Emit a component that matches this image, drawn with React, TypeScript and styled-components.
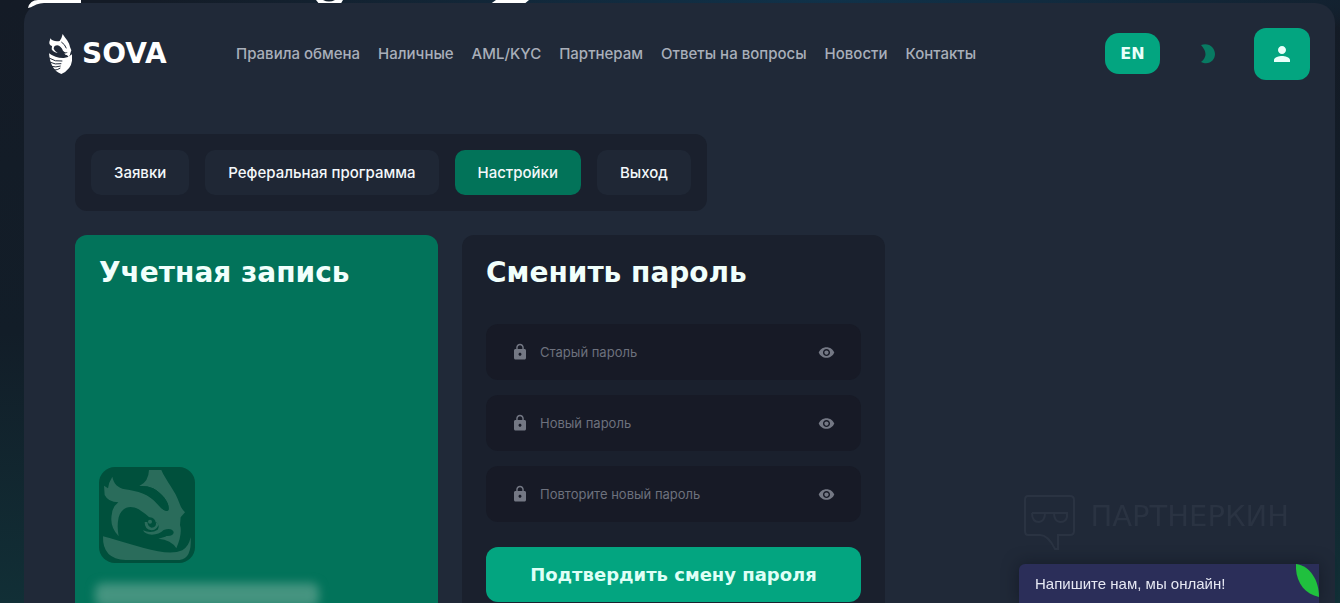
import React from "react";
import styled, { createGlobalStyle } from "styled-components";
import { MdLock, MdPerson, MdVisibility } from "react-icons/md";

const sans = `Inter, "Noto Sans", sans-serif`;
const wide = `"DejaVu Sans", sans-serif`;

const GlobalStyle = createGlobalStyle`
  * { box-sizing: border-box; }
  html { scrollbar-width: none; }
  body { margin: 0; background: #121923; font-family: ${sans}; }
  button, input { font: inherit; }
`;

const Page = styled.div`
  height: 100vh;
  overflow-y: auto;
  scrollbar-width: none;
  padding: 3px 5px 0 24px;
  background:
    radial-gradient(ellipse 700px 40px at 62% 0, #10324a, transparent),
    linear-gradient(180deg, #141b26 0%, #121d28 55%, #112f36 100%);
`;

const Backdrop = styled.svg`
  position: absolute;
  top: 0;
  left: 0;
`;

const Panel = styled.div`
  position: relative;
  min-height: 100%;
  border-radius: 20px 20px 0 0;
  background: #202938;
`;

const Header = styled.header`
  display: flex;
  align-items: center;
  height: 101px;
  padding: 0 25px;
`;

const Logo = styled.a`
  display: flex;
  align-items: center;
  gap: 9px;
  width: 187px;
  color: #fff;
  font: 700 28px/32px ${wide};
  text-decoration: none;
`;

const Nav = styled.nav`
  display: flex;
  gap: 18px;
  margin-right: auto;
`;

const NavLink = styled.a`
  color: #a9afba;
  font-size: 15px;
  font-weight: 500;
  line-height: 20px;
  white-space: nowrap;
  text-decoration: none;
`;

const HeaderButton = styled.button<{ $large?: boolean }>`
  display: flex;
  align-items: center;
  justify-content: center;
  width: ${(p) => (p.$large ? 56 : 55)}px;
  height: ${(p) => (p.$large ? 52 : 41)}px;
  padding: 0;
  border: 0;
  border-radius: ${(p) => (p.$large ? 12 : 14)}px;
  background: #03a580;
  color: #e9fffa;
  font: 700 16px/20px ${wide};
`;

const ThemeButton = styled.button`
  display: flex;
  margin: 0 38px;
  padding: 0;
  border: 0;
  background: none;
`;

const Content = styled.main`
  display: flex;
  flex-direction: column;
  align-items: flex-start;
  gap: 24px;
  padding: 30px 51px 24px;
`;

const Tabs = styled.nav`
  display: flex;
  gap: 16px;
  padding: 16px;
  border-radius: 12px;
  background: #1a202d;
`;

const Tab = styled.a<{ $active?: boolean }>`
  padding: 12px 23px;
  border-radius: 10px;
  background: ${(p) => (p.$active ? "#027359" : "#1f2735")};
  color: #f4f8fa;
  font-size: 15px;
  font-weight: 500;
  line-height: 21px;
  text-decoration: none;
`;

const Cards = styled.div`
  display: flex;
  gap: 24px;
`;

const Card = styled.section<{ $accent?: boolean }>`
  display: flex;
  flex-direction: column;
  width: ${(p) => (p.$accent ? 363 : 423)}px;
  padding: 24px;
  border-radius: 12px;
  background: ${(p) => (p.$accent ? "#02735a" : "#1a202d")};
`;

const Title = styled.h2`
  margin: 0 0 37px;
  color: #f1fffc;
  font: 700 28px/28px ${wide};
  white-space: nowrap;
`;

const Avatar = styled.svg`
  width: 96px;
  height: 96px;
  margin-top: auto;
  border-radius: 16px;
  background: #00503c;
`;

const HiddenName = styled.div`
  width: 224px;
  height: 24px;
  margin: 20px 0 -5px -4px;
  border-radius: 8px;
  background: #459480;
  filter: blur(5px);
`;

const Form = styled.form`
  display: flex;
  flex-direction: column;
  gap: 15px;
`;

const Field = styled.label`
  display: flex;
  align-items: center;
  gap: 11px;
  height: 56px;
  padding: 0 26px 0 25px;
  border-radius: 12px;
  background: #171a26;
  color: #747884;
`;

const FieldInput = styled.input`
  flex: 1;
  min-width: 0;
  padding: 0;
  border: 0;
  outline: 0;
  background: none;
  color: #d5d9e0;
  font-size: 13px;
  line-height: 20px;
  &::placeholder { color: #6d717d; opacity: 1; }
`;

const EyeButton = styled.button`
  display: flex;
  padding: 0;
  border: 0;
  background: none;
  color: inherit;
`;

const Submit = styled.button`
  height: 55px;
  margin-top: 10px;
  padding: 0;
  border: 0;
  border-radius: 12px;
  background: #03a580;
  color: #dffff6;
  font: 700 18px/24px ${wide};
  white-space: nowrap;
`;

const Watermark = styled.div`
  position: fixed;
  right: 51px;
  bottom: 52px;
  display: flex;
  gap: 14px;
  color: #2a3342;
  font: 400 29px/42px ${wide};
`;

const Chat = styled.button`
  position: fixed;
  right: 21px;
  bottom: 0;
  width: 300px;
  height: 39px;
  padding: 0 16px;
  border: 0;
  border-radius: 6px 0 0 0;
  background: #2b2e59;
  box-shadow: 0 0 16px rgba(10, 14, 24, 0.5);
  color: #e6e8f3;
  font: 400 15px/20px "Liberation Sans", sans-serif;
  text-align: left;
`;

const Leaf = styled.svg`
  position: absolute;
  top: 0;
  right: 0;
`;

const OwlMark = () => (
  <svg width="24" height="40" viewBox="0 0 72 120" aria-hidden="true">
    <g fill="#fff">
      <path d="M4 13C10 22 22 23 32 21Q38 14 41 0C50 14 62 26 63 39L67 49L64 58Q64 65 58 70Q57 62 49 62L46 58Q54 59 56 54Q48 58 42 50Q36 36 25 34Q15 34 14 44Q17 52 26 57Q14 56 8 46L9 36Q0 33 1 24Q3 20 4 13Z" />
      <path d="M0 58Q20 73 45 72Q60 70 69 61V80Q66 106 37 120Q4 108 0 58Z" />
    </g>
    <g fill="none" stroke="#202938" strokeWidth="3">
      <path d="M0 72Q18 84 40 81M2 84Q18 93 37 89M7 97Q20 101 35 96M15 108Q25 109 34 102" />
      <path d="M37 24Q48 31 52 43" />
    </g>
  </svg>
);

const OwlAvatar = () => (
  <Avatar viewBox="0 0 288 288" role="img" aria-label="Аватар">
    <g fill="#2a6c5b">
      <path d="M40 29C44 51 56 62 78 67C116 73 148 80 176 112Q198 138 208 130C214 112 194 82 162 64Q142 55 121 57Q149 44 150 9H187C200 40 230 73 241 108Q246 124 258 136L245 151L243 174Q251 199 232 244Q217 218 178 215Q204 209 202 207Q225 208 224 195Q218 181 194 189Q180 203 159 203Q137 202 132 190Q157 201 176 188Q184 174 171 166Q161 168 156 155Q142 142 119 127C92 112 68 121 59 151Q53 178 59 208Q30 177 39 139Q41 119 58 106Q28 106 17 84L15 56L27 64Q29 46 40 29Z" />
      <path d="M12 208C64 221 120 242 177 253Q224 262 250 250Q269 239 275 211Q279 275 242 279H80Q10 277 12 208Z" />
    </g>
    <path
      d="M176 112Q198 138 208 130C214 112 194 82 162 64Q142 55 121 57C150 63 168 72 184 92Q196 106 195 116Q186 113 168 92Q148 73 112 69C140 78 158 90 176 112Z"
      fill="#00503c"
    />
    <circle cx="153" cy="168" r="17" fill="#00503c" />
    <path d="M137 165Q136 187 158 190Q176 188 179 170L171 167Q172 181 158 182Q147 180 145 165Z" fill="#2a6c5b" />
    <circle cx="153" cy="164" r="6" fill="#2a6c5b" />
  </Avatar>
);

const links = ["Правила обмена", "Наличные", "AML/KYC", "Партнерам", "Ответы на вопросы", "Новости", "Контакты"];
const tabs = ["Заявки", "Реферальная программа", "Настройки", "Выход"];
const fields = ["Старый пароль", "Новый пароль", "Повторите новый пароль"];

export default function App() {
  return (
    <Page>
      <GlobalStyle />
      <Backdrop width="540" height="12" viewBox="0 0 540 12" aria-hidden="true">
        <path d="M28 8Q30 0 38 0H81V6H36ZM316 0H343L340 5H320ZM496 0H529L523 5H489Z" fill="#fff" />
        <path d="M323 0H335Q329 3 323 0Z" fill="#14202c" />
      </Backdrop>
      <Panel>
        <Header>
          <Logo href="#">
            <OwlMark />
            SOVA
          </Logo>
          <Nav>
            {links.map((text) => (
              <NavLink href="#" key={text}>{text}</NavLink>
            ))}
          </Nav>
          <HeaderButton>EN</HeaderButton>
          <ThemeButton aria-label="Тёмная тема">
            <svg width="18" height="20" viewBox="0 0 18 20">
              <path d="M3 1C11-2 17 4 17 10S11 22 3 18Q12 11 3 1Z" fill="#087a62" />
            </svg>
          </ThemeButton>
          <HeaderButton $large aria-label="Личный кабинет">
            <MdPerson size={24} />
          </HeaderButton>
        </Header>
        <Content>
          <Tabs>
            {tabs.map((text) => (
              <Tab href="#" key={text} $active={text === "Настройки"}>{text}</Tab>
            ))}
          </Tabs>
          <Cards>
            <Card $accent>
              <Title>Учетная запись</Title>
              <OwlAvatar />
              <HiddenName />
            </Card>
            <Card>
              <Title>Сменить пароль</Title>
              <Form>
                {fields.map((text) => (
                  <Field key={text}>
                    <MdLock size={18} />
                    <FieldInput type="password" placeholder={text} aria-label={text} />
                    <EyeButton type="button" aria-label="Показать пароль">
                      <MdVisibility size={17} />
                    </EyeButton>
                  </Field>
                ))}
                <Submit type="button">Подтвердить смену пароля</Submit>
              </Form>
            </Card>
          </Cards>
        </Content>
      </Panel>
      <Watermark>
        <svg width="52" height="56" viewBox="0 0 52 56" fill="none" stroke="currentColor" strokeWidth="2" aria-hidden="true">
          <path d="M4 1H46Q50 1 50 5V36Q50 40 46 40H34V54H31Q24 40 16 40H4Q1 40 1 36V5Q1 1 4 1Z" />
          <path d="M8 18H43V22Q42 27 36 27Q30 26 30 18M21 18Q21 26 15 27Q8 27 8 18" />
        </svg>
        ПАРТНЕРКИН
      </Watermark>
      <Chat>
        Напишите нам, мы онлайн!
        <Leaf width="23" height="33" viewBox="0 0 23 33" aria-hidden="true">
          <path d="M0 0C14 2 23 16 23 33C8 30-1 17 0 0Z" fill="#20c03e" />
        </Leaf>
      </Chat>
    </Page>
  );
}
